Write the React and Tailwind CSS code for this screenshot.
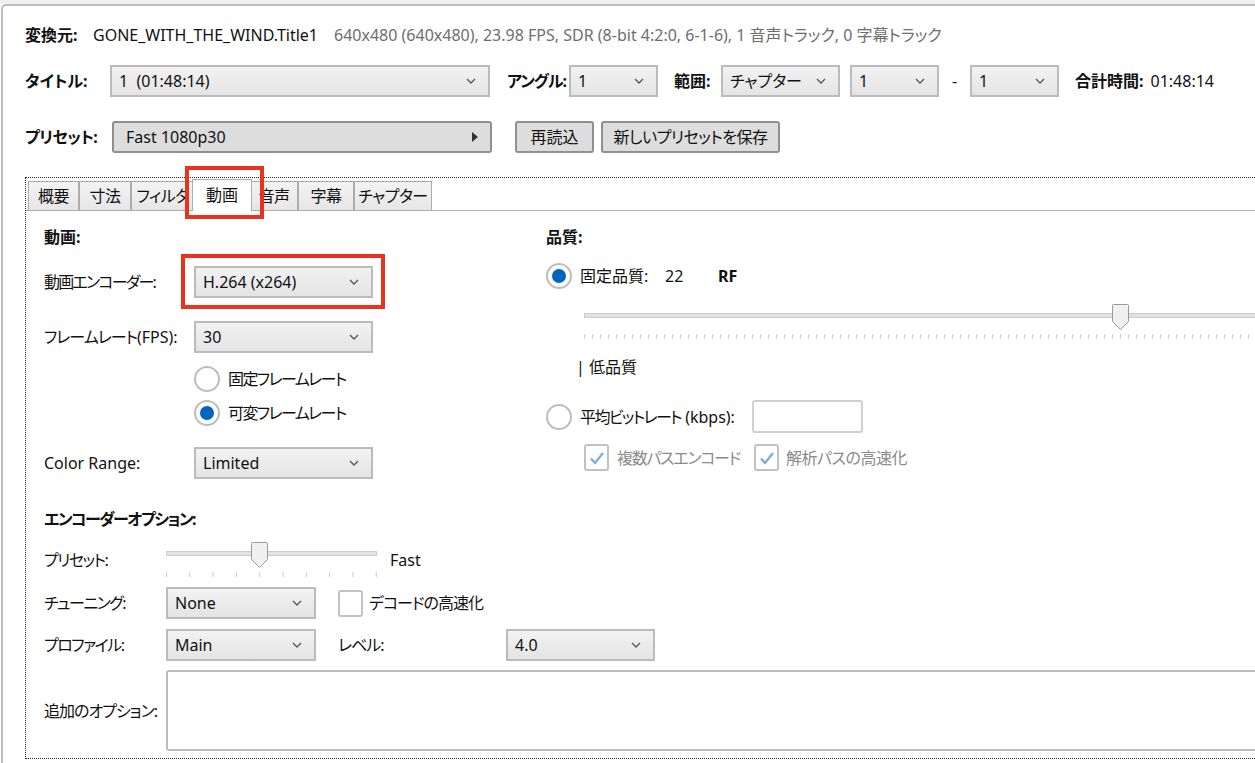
import React from "react";

const FONT = "font-['Noto_Sans','Noto_Sans_CJK_JP',sans-serif] [font-feature-settings:'palt']";

function Chevron() {
  return (
    <svg width="10" height="6" viewBox="0 0 10 6" className="shrink-0">
      <path d="M1 1l4 4 4-4" fill="none" stroke="#555" strokeWidth="1.3" />
    </svg>
  );
}

function Select({ className, value }) {
  return (
    <div
      className={`flex h-[32px] shrink-0 items-center justify-between border-2 border-[#bbbbbb] bg-gradient-to-b from-[#f2f2f2] to-[#e4e4e4] pl-[7px] pr-[12px] ${className}`}
    >
      <span className="whitespace-pre">{value}</span>
      <Chevron />
    </div>
  );
}

function Radio({ checked }) {
  return (
    <div className="flex h-[26px] w-[26px] shrink-0 items-center justify-center rounded-full border-2 border-[#bdbdbd] bg-white">
      {checked ? <div className="h-[14px] w-[14px] rounded-full bg-[#0067c0]" /> : null}
    </div>
  );
}

function Checkbox({ checked }) {
  return (
    <div className="flex h-[27px] w-[25px] shrink-0 items-center justify-center rounded-[3px] border-2 border-[#c2c2c2] bg-white">
      {checked ? (
        <svg width="16" height="14" viewBox="0 0 16 14">
          <path d="M2 7.5l4 4.5 8-10" fill="none" stroke="#7ab0de" strokeWidth="2.4" />
        </svg>
      ) : null}
    </div>
  );
}

function QualitySlider() {
  const ticks = [];
  for (let x = 0.5; x < 700; x += 8) ticks.push(x);
  return (
    <svg width="700" height="40" viewBox="0 0 700 40" className="block">
      <rect x="0.5" y="12.5" width="699" height="4" fill="#e2e2e2" stroke="#cdcdcd" />
      {ticks.map((x) => (
        <line key={x} x1={x} x2={x} y1="33" y2="38" stroke="#d2d2d2" />
      ))}
      <path d="M528.5 4.5q0-1 1-1h14q1 0 1 1v16l-8 8-8-8z" fill="#f0f0f0" stroke="#9a9a9a" />
    </svg>
  );
}

function PresetSlider() {
  const ticks = [];
  for (let i = 0; i < 10; i++) ticks.push(0.5 + i * 23.3);
  return (
    <svg width="212" height="36" viewBox="0 0 212 36" className="block shrink-0">
      <rect x="0.5" y="9.5" width="210" height="4" fill="#e2e2e2" stroke="#cdcdcd" />
      {ticks.map((x) => (
        <line key={x} x1={x} x2={x} y1="30" y2="35" stroke="#c8c8c8" />
      ))}
      <path d="M85.5 1.5q0-1 1-1h14q1 0 1 1v16l-8 8-8-8z" fill="#f0f0f0" stroke="#9a9a9a" />
    </svg>
  );
}

const tabs = [
  { label: "概要", w: "w-[51px]" },
  { label: "寸法", w: "w-[52px]" },
  { label: "フィルタ", w: "w-[63px]" },
  { label: "動画", w: "w-[60px]", active: true },
  { label: "音声", w: "w-[48px]" },
  { label: "字幕", w: "w-[56px]" },
  { label: "チャプター", w: "w-[78px]" },
];

export default function App() {
  return (
    <div className={`relative h-[763px] w-[1255px] overflow-hidden bg-white text-[16px] leading-[24px] text-[#111] ${FONT}`}>
      <div className="h-[4px] bg-[#f0f0f0]" />
      <div className="ml-[1px] h-full rounded-tl-[5px] border-l-2 border-t-2 border-[#bdbdbd] pl-[22px]">
        {/* source line */}
        <div className="mt-[17px] flex h-[24px] items-center whitespace-nowrap">
          <span className="w-[68px] font-bold">変換元:</span>
          <span>GONE_WITH_THE_WIND.Title1</span>
          <span className="ml-[16px] text-[#6e6e6e]">
            640x480 (640x480), 23.98 FPS, SDR (8-bit 4:2:0, 6-1-6), 1 音声トラック, 0 字幕トラック
          </span>
        </div>

        {/* title row */}
        <div className="mt-[18px] flex h-[32px] items-center whitespace-nowrap">
          <span className="w-[85px] font-bold">タイトル:</span>
          <Select className="w-[380px]" value="1  (01:48:14)" />
          <span className="ml-[17px] w-[62px] font-bold tracking-[-1px]">アングル:</span>
          <Select className="w-[89px]" value="1" />
          <span className="ml-[16px] w-[47px] font-bold">範囲:</span>
          <Select className="w-[119px]" value="チャプター" />
          <Select className="ml-[10px] w-[89px]" value="1" />
          <span className="w-[31px] text-center">-</span>
          <Select className="w-[89px]" value="1" />
          <span className="ml-[16px] font-bold">合計時間:</span>
          <span className="ml-[7px]">01:48:14</span>
        </div>

        {/* preset row */}
        <div className="mt-[24px] flex h-[32px] items-center whitespace-nowrap">
          <span className="w-[87px] font-bold tracking-[-0.5px]">プリセット:</span>
          <div className="flex h-[32px] w-[380px] items-center justify-between rounded-[3px] border-2 border-[#8f8f8f] bg-[#dddddd] pl-[12px] pr-[12px]">
            <span>Fast 1080p30</span>
            <svg width="6" height="10" viewBox="0 0 6 10">
              <path d="M0 0l6 5-6 5z" fill="#333" />
            </svg>
          </div>
          <div className="ml-[23px] flex h-[32px] w-[79px] items-center justify-center rounded-[3px] border-2 border-[#8f8f8f] bg-[#dddddd]">
            再読込
          </div>
          <div className="ml-[7px] flex h-[32px] w-[179px] items-center justify-center rounded-[3px] border-2 border-[#8f8f8f] bg-[#dddddd] tracking-[-0.5px]">
            新しいプリセットを保存
          </div>
        </div>

        {/* tab control */}
        <div className="mt-[24px] w-[1320px] border border-dotted border-[#222]">
          <div className="flex items-end border-b border-[#acacac] pl-[2px] pt-[1px]">
            {tabs.map((t) =>
              t.active ? (
                <div
                  key={t.label}
                  className={`relative z-10 -mb-px -ml-[2px] -mr-[2px] flex h-[32px] items-center justify-center border border-b-0 border-[#acacac] bg-white pb-[2px] ${t.w}`}
                >
                  {t.label}
                </div>
              ) : (
                <div
                  key={t.label}
                  className={`flex h-[29px] items-center justify-center border border-b-0 border-[#acacac] bg-gradient-to-b from-[#f3f3f3] to-[#e6e6e6] tracking-[-0.5px] ${t.w}`}
                >
                  {t.label}
                </div>
              )
            )}
          </div>

          <div className="pl-[18px] whitespace-nowrap">
            <div className="flex pt-[14px]">
              {/* left column */}
              <div className="w-[502px]">
                <div className="h-[24px] font-bold">動画:</div>
                <div className="mt-[17px] flex h-[32px] items-center">
                  <span className="w-[150px] tracking-[-1.8px]">動画エンコーダー:</span>
                  <Select className="w-[179px]" value="H.264 (x264)" />
                </div>
                <div className="mt-[23px] flex h-[32px] items-center">
                  <span className="w-[150px]">
                    <span className="tracking-[-1px]">フレームレート</span>(FPS):
                  </span>
                  <Select className="w-[179px]" value="30" />
                </div>
                <div className="mt-[13px] flex h-[26px] items-center pl-[150px]">
                  <Radio />
                  <span className="ml-[8px] tracking-[-1.6px]">固定フレームレート</span>
                </div>
                <div className="mt-[8px] flex h-[26px] items-center pl-[150px]">
                  <Radio checked />
                  <span className="ml-[8px] tracking-[-1.6px]">可変フレームレート</span>
                </div>
                <div className="mt-[21px] flex h-[32px] items-center">
                  <span className="w-[150px]">Color Range:</span>
                  <Select className="w-[179px]" value="Limited" />
                </div>
              </div>

              {/* right column */}
              <div className="flex-1">
                <div className="h-[24px] font-bold">品質:</div>
                <div className="mt-[14px] flex h-[26px] items-center">
                  <Radio checked />
                  <span className="ml-[8px] w-[85px]">固定品質:</span>
                  <span className="w-[53px]">22</span>
                  <span className="font-bold">RF</span>
                </div>
                <div className="mt-[12px] pl-[38px]">
                  <QualitySlider />
                </div>
                <div className="mt-[14px] h-[24px] pl-[30px]">| 低品質</div>
                <div className="mt-[21px] flex h-[33px] items-center">
                  <Radio />
                  <span className="ml-[8px] w-[172px]">
                    <span className="tracking-[-1.6px]">平均ビットレート</span> (kbps):
                  </span>
                  <div className="h-[33px] w-[111px] rounded-[3px] border-2 border-[#d0d0d0] bg-white" />
                </div>
                <div className="mt-[11px] flex h-[27px] items-center pl-[38px] text-[#8a8a8a]">
                  <Checkbox checked />
                  <span className="ml-[8px] w-[137px] tracking-[-1.3px]">複数パスエンコード</span>
                  <Checkbox checked />
                  <span className="ml-[7px] tracking-[-0.5px]">解析パスの高速化</span>
                </div>
              </div>
            </div>

            {/* encoder options */}
            <div className="mt-[28px] h-[24px] font-bold tracking-[-1.5px]">エンコーダーオプション:</div>
            <div className="mt-[11px] flex h-[36px] items-center">
              <span className="w-[122px] tracking-[-1.5px]">プリセット:</span>
              <PresetSlider />
              <span className="ml-[12px]">Fast</span>
            </div>
            <div className="mt-[9px] flex h-[32px] items-center">
              <span className="w-[122px] tracking-[-1.5px]">チューニング:</span>
              <Select className="w-[150px]" value="None" />
              <div className="ml-[22px]">
                <Checkbox />
              </div>
              <span className="ml-[6px] tracking-[-1px]">デコードの高速化</span>
            </div>
            <div className="mt-[10px] flex h-[32px] items-center">
              <span className="w-[122px] tracking-[-1.5px]">プロファイル:</span>
              <Select className="w-[150px]" value="Main" />
              <span className="ml-[22px] w-[168px] tracking-[-1px]">レベル:</span>
              <Select className="w-[149px]" value="4.0" />
            </div>
            <div className="mt-[9px] mb-[7px] flex h-[81px] items-center">
              <span className="w-[122px] tracking-[-1px]">追加のオプション:</span>
              <div className="h-[81px] flex-1 rounded-[3px] border-2 border-[#bbbbbb] bg-white" />
            </div>
          </div>
        </div>
      </div>

      {/* annotation boxes */}
      <div className="absolute left-[185px] top-[166px] h-[53px] w-[79px] border-[4px] border-[#e8341c]" />
      <div className="absolute left-[181px] top-[254px] h-[55px] w-[204px] border-[4px] border-[#e8341c]" />
    </div>
  );
}
